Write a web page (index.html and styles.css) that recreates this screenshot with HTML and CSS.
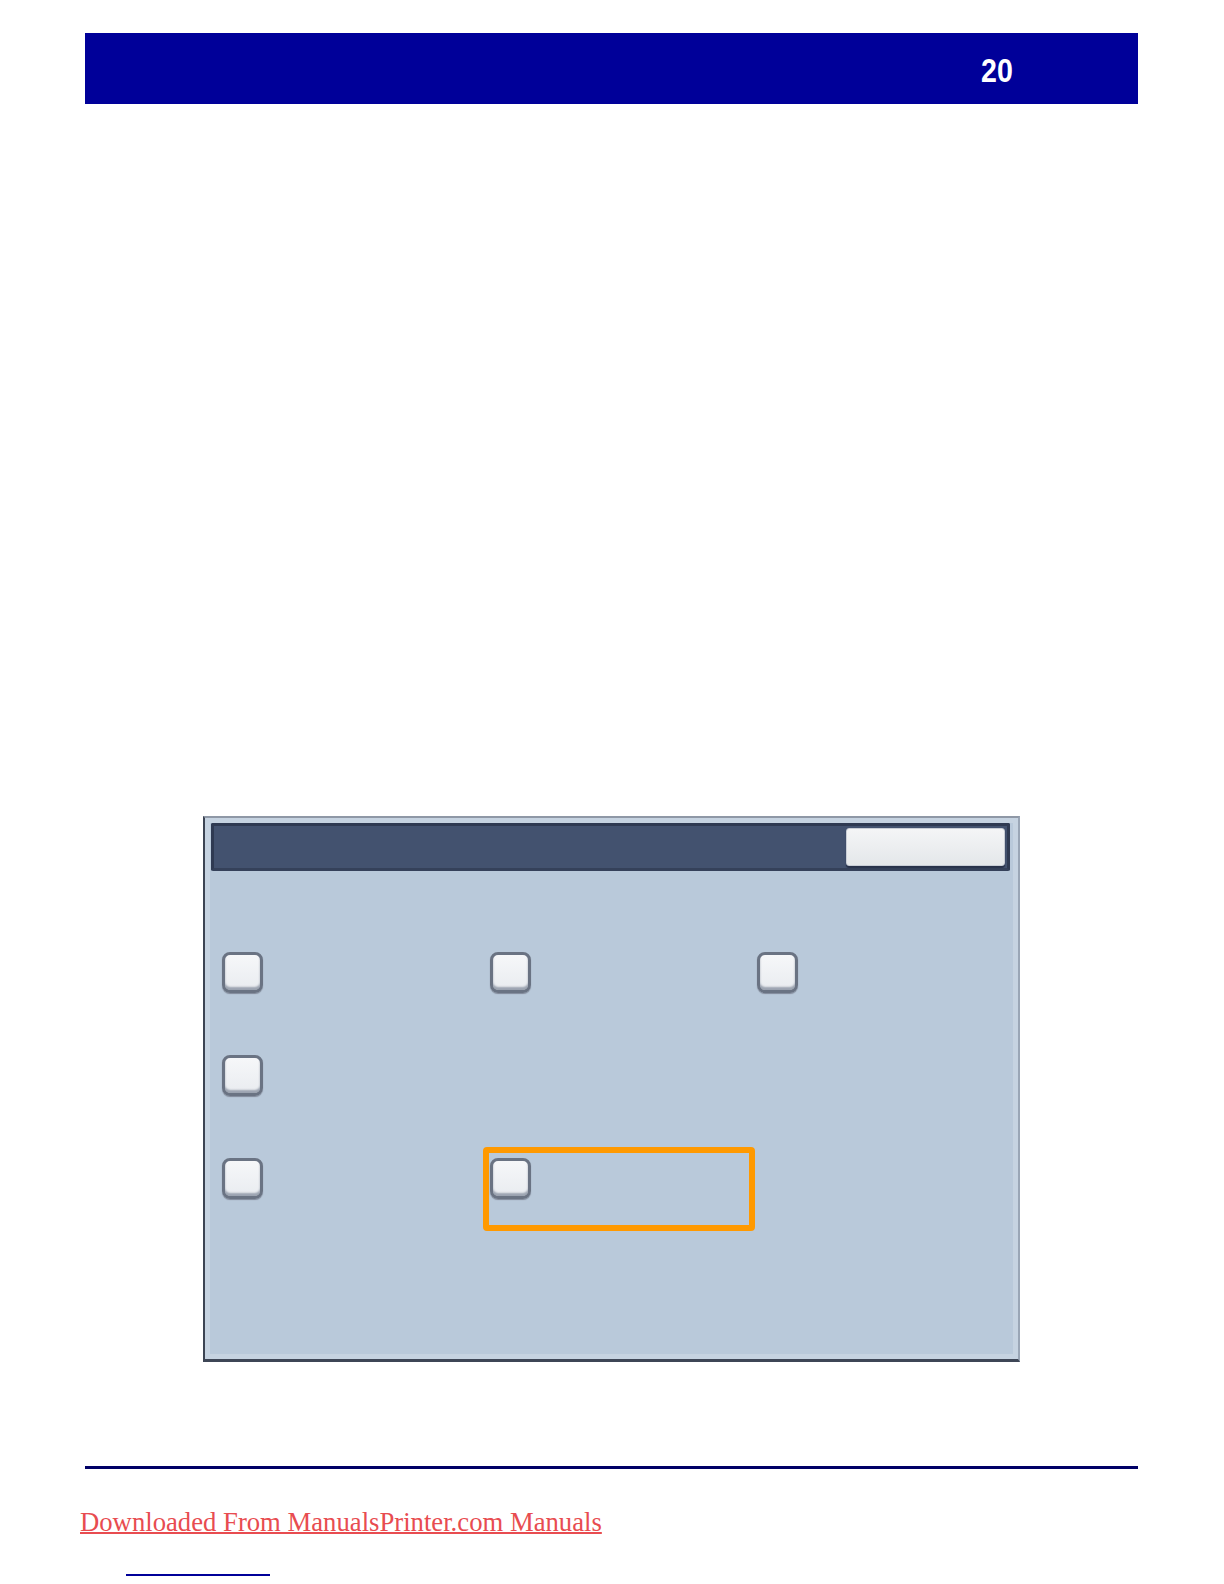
FILE: index.html
```html
<!DOCTYPE html>
<html>
<head>
<meta charset="utf-8">
<link rel="stylesheet" href="styles.css">
</head>
<body>
<header class="topbar"><span class="pagenum">20</span></header>
<main class="content">
  <div class="panel">
    <div class="titlebar"><div class="tbutton"></div></div>
    <div class="options">
      <div class="cell"><span class="chk"></span></div>
      <div class="cell"><span class="chk"></span></div>
      <div class="cell"><span class="chk"></span></div>
      <div class="cell"><span class="chk"></span></div>
      <div class="cell"></div>
      <div class="cell"></div>
      <div class="cell"><span class="chk"></span></div>
      <div class="cell hl"><span class="chk"></span><span class="highlight"></span></div>
      <div class="cell"></div>
    </div>
  </div>
</main>
<footer class="foot">
  <div class="rule"></div>
  <a class="dl" href="#">Downloaded From ManualsPrinter.com Manuals</a>
  <div class="miniline"></div>
</footer>
</body>
</html>
```
FILE: styles.css
```css
html, body { margin: 0; padding: 0; background: #ffffff; }
body { width: 1224px; height: 1584px; overflow: hidden; font-family: "Liberation Sans", Arial, sans-serif; }

.topbar {
  margin: 33px 0 0 85px;
  width: 1053px;
  height: 71px;
  background: #000099;
  display: flex;
  align-items: center;
  justify-content: flex-end;
  box-sizing: border-box;
  padding-right: 125px;
}
.pagenum {
  display: inline-block;
  color: #ffffff;
  font-family: "Liberation Sans", Arial, sans-serif;
  font-weight: bold;
  font-size: 34px;
  line-height: 1;
  transform: scaleX(0.84);
  transform-origin: right center;
  margin-top: 2px;
}

.content { height: 1258px; box-sizing: border-box; padding: 712px 0 0 203px; }

.panel {
  width: 817px;
  height: 546px;
  box-sizing: border-box;
  background: #b9c9da;
  border-left: 2px solid #3c4453;
  border-bottom: 3px solid #3e4656;
  border-top: 2px solid #8f98a6;
  border-right: 2px solid #9aa6b6;
  box-shadow: inset 0 0 0 5px #c6d3e1;
  padding: 5px 8px 0 6px;
}
.titlebar {
  height: 48px;
  box-sizing: border-box;
  background: #43526f;
  border: 3px solid #2f3a52;
  border-bottom-color: #35415a;
  border-radius: 2px;
  display: flex;
  justify-content: flex-end;
  align-items: center;
  padding-right: 2px;
}
.tbutton {
  width: 159px;
  height: 38px;
  box-sizing: border-box;
  border-radius: 3px;
  background: linear-gradient(#f4f5f6, #e4e7ea);
  border: 1px solid #c9ced6;
  box-shadow: 0 2px 1px #28324a;
}

.options {
  display: grid;
  grid-template-columns: 268px 267px 200px;
  grid-template-rows: 103px 103px 103px;
  padding: 81px 0 0 11px;
}
.cell { position: relative; }
.chk {
  display: block;
  width: 41px;
  height: 41px;
  box-sizing: border-box;
  border: 3px solid #6a7383;
  border-radius: 8px;
  background: linear-gradient(#f6f7f9, #e9ecf0);
  box-shadow: inset 0 -3px 2px #9ba3b0, 0 1px 1px #808898;
}
.highlight {
  position: absolute;
  left: -7px;
  top: -11px;
  width: 272px;
  height: 84px;
  box-sizing: border-box;
  border: 6px solid #ff9900;
  border-radius: 4px;
}

.foot { padding-left: 85px; }
.rule { width: 1053px; height: 3px; background: #000066; margin-top: 104px; }
.dl {
  display: inline-block;
  margin: 38px 0 0 -5px;
  font-family: "Liberation Serif", "Times New Roman", serif;
  font-size: 26.7px;
  line-height: 30px;
  color: #e84c50;
  text-decoration: underline;
  text-decoration-thickness: 2px;
}
.miniline { width: 144px; height: 2px; background: #000099; margin: 37px 0 0 41px; }
```
